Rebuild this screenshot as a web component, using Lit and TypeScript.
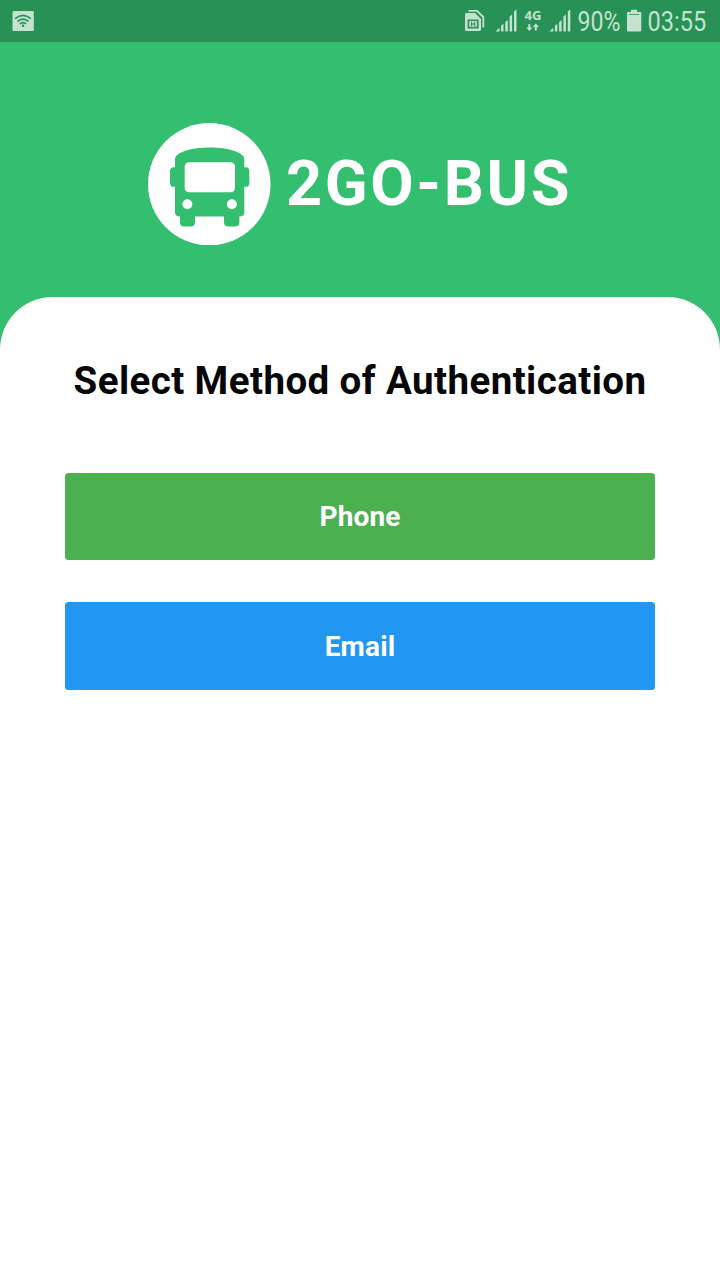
import { LitElement, html, css, svg } from "lit";
import { customElement } from "lit/decorators.js";

const signal = svg`<path d="M0 22L4 18.2V22ZM5.6 22V16.2L8 14.2V22ZM9.8 22V12.4L12.3 10.4V22ZM14.1 22V6.9L16.6 4.9V22ZM18.5 22V2L21 0V22Z"/>`;

@customElement("status-bar")
class StatusBar extends LitElement {
  static styles = css`
    :host { display: block; background: #279156; }
    .bar { display: block; width: 720px; height: 42px; fill: #c3e2cf; font-family: Roboto, sans-serif; }
    .cut { fill: #279156; }
    .line { fill: none; stroke: #279156; stroke-width: 1.6; }
    .thin { stroke-width: 1.1; }
    .edge { fill: none; stroke: #c3e2cf; stroke-width: 1.8; }
    .read { font-size: 27px; }
    .net { font: 700 12.5px "Noto Sans", sans-serif; }
  `;
  render() {
    return html`<svg class="bar" viewBox="0 0 720 42">
      <rect x="12.5" y="11" width="21.3" height="20" rx="1"/>
      <path class="line" d="M15.2 18.6Q23 12 30.8 18.6M17.5 21.4Q23 16.8 28.5 21.4M19.8 24Q23 21.2 26.2 24"/>
      <circle class="cut" cx="23" cy="25.8" r="1.2"/>
      <path d="M466.5 13H475L481 19V29.5Q481 31 479.5 31H466.5Q465 31 465 29.5V14.5Q465 13 466.5 13Z"/>
      <path class="edge" d="M468.5 10.8H477L483.3 17V27.5"/>
      <path class="line" d="M468.4 20.2H477.8V27.6H468.4Z"/>
      <path class="line thin" d="M471.5 21.8V26.2M474.7 21.8V26.2M471.5 24H474.7"/>
      <g transform="translate(495.5 9.5)">${signal}</g>
      <text class="net" x="524.5" y="20" textLength="17" lengthAdjust="spacingAndGlyphs">4G</text>
      <path d="M528.3 24H530.3V27.5H532.5L529.3 31L526.2 27.5H528.3ZM534.8 30.5H536.8V27H539L535.8 23.5L532.7 27H534.8Z"/>
      <g transform="translate(549.3 9.5)">${signal}</g>
      <text class="read" x="577.5" y="31.3" textLength="43" lengthAdjust="spacingAndGlyphs">90%</text>
      <path d="M631 12V9.7H637V12H640.5Q641.3 12 641.3 13V30.5Q641.3 31.5 640.5 31.5H627.8Q627 31.5 627 30.5V13Q627 12 627.8 12Z"/>
      <path class="cut" d="M629 14H639.3V14.8H629Z"/>
      <text class="read" x="647.6" y="31.3" textLength="58.5" lengthAdjust="spacingAndGlyphs">03:55</text>
    </svg>`;
  }
}

@customElement("app-root")
class AppRoot extends LitElement {
  static styles = css`
    :host { display: flex; flex-direction: column; height: 1280px; overflow: hidden; background: #34bf70; font-family: Roboto, sans-serif; }
    .brand { box-sizing: border-box; height: 255px; display: flex; align-items: flex-start; padding: 80.5px 0 0 148px; gap: 15.5px; color: #fff; }
    .logo { width: 122.5px; height: 122.5px; flex: none; fill: #34bf70; }
    .white { fill: #fff; }
    .name { margin: 0; font-size: 63px; font-weight: 700; line-height: 122.5px; letter-spacing: 2.6px; white-space: nowrap; }
    .panel { flex: 1; background: #fff; border-radius: 52.5px 52.5px 0 0; padding: 60.5px 65px 0; display: flex; flex-direction: column; align-items: center; }
    .title { margin: 0 0 69px; font-size: 38.5px; line-height: 46px; font-weight: 700; letter-spacing: 0.42px; color: #060606; white-space: nowrap; }
    .choices { width: 590px; display: flex; flex-direction: column; gap: 42px; }
    .btn { height: 87.5px; border: 0; padding: 0; border-radius: 3.5px; color: #fff; font: 700 28px Roboto, sans-serif; letter-spacing: 0.15px; }
    .phone { background: #4caf50; }
    .email { background: #2196f3; padding-top: 1px; }
  `;
  render() {
    return html`
      <status-bar></status-bar>
      <header class="brand">
        <svg class="logo" viewBox="24 22.5 367.5 367.5">
          <circle class="white" cx="207.75" cy="206.25" r="183.75"/>
          <path d="M105 131C105 110 156 96 209 96S313 110 313 131V155H317Q328 155 328 166V203Q328 214 317 214H313V290Q313 303 298 303V320Q298 333 285 333H266Q252 333 252 320V303H165V320Q165 333 152 333H133Q120 333 120 320V303Q105 303 105 290V214H102Q90 214 90 203V166Q90 155 102 155H105Z"/>
          <rect class="white" x="134" y="140" width="151" height="90" rx="13"/>
          <circle class="white" cx="142" cy="266" r="15"/>
          <circle class="white" cx="275.5" cy="266" r="15"/>
        </svg>
        <h1 class="name">2GO-BUS</h1>
      </header>
      <main class="panel">
        <h2 class="title">Select Method of Authentication</h2>
        <div class="choices">
          <button class="btn phone">Phone</button>
          <button class="btn email">Email</button>
        </div>
      </main>`;
  }
}
